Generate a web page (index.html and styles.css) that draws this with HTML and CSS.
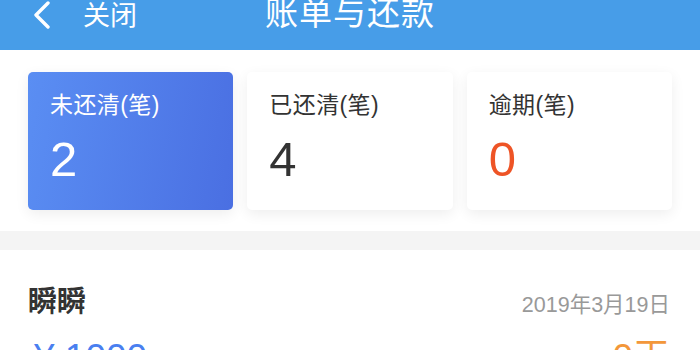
FILE: index.html
```html
<!DOCTYPE html>
<html lang="zh-CN">
<head>
<meta charset="utf-8">
<title>账单与还款</title>
<link rel="stylesheet" href="styles.css">
</head>
<body>
<header class="topbar">
  <div class="topbar-left">
    <svg class="back" width="20" height="28" viewBox="0 0 20 28"><path d="M16 2 L4 14 L16 26" fill="none" stroke="#fff" stroke-width="3.4" stroke-linecap="round" stroke-linejoin="round"/></svg>
    <span class="close">关闭</span>
  </div>
  <div class="title">账单与还款</div>
  <div></div>
</header>
<section class="stats">
  <div class="card card-active">
    <div class="card-label">未还清(笔)</div>
    <div class="card-num">2</div>
  </div>
  <div class="card">
    <div class="card-label">已还清(笔)</div>
    <div class="card-num">4</div>
  </div>
  <div class="card">
    <div class="card-label">逾期(笔)</div>
    <div class="card-num num-red">0</div>
  </div>
</section>
<div class="divider"></div>
<section class="bill">
  <div class="bill-row">
    <div class="bill-name">瞬瞬</div>
    <div class="bill-date">2019年3月19日</div>
  </div>
  <div class="bill-row bill-row2">
    <div class="bill-amount">¥ 1000</div>
    <div class="bill-days">0天</div>
  </div>
</section>
</body>
</html>
```
FILE: styles.css
```css
html, body {
  margin: 0;
  padding: 0;
  background: #fff;
  font-family: "Liberation Sans", "Noto Sans CJK SC", sans-serif;
  overflow: hidden;
}
.topbar {
  height: 50px;
  background: #479de8;
  color: #fff;
  display: grid;
  grid-template-columns: 1fr auto 1fr;
  align-items: start;
}
.topbar-left {
  display: flex;
  align-items: center;
  padding-left: 32px;
  height: 34px;
  margin-top: -2px;
}
.back {
  display: block;
}
.close {
  font-size: 27px;
  line-height: 34px;
  margin-left: 31px;
  margin-top: 1px;
}
.title {
  font-size: 33px;
  line-height: 34px;
  margin-top: -3px;
  letter-spacing: 1px;
}
.stats {
  display: grid;
  grid-template-columns: repeat(3, 1fr);
  gap: 14px;
  padding: 22px 28px 21px;
}
.card {
  height: 138px;
  box-sizing: border-box;
  border-radius: 5px;
  background: #fff;
  box-shadow: 0 4px 14px rgba(0, 0, 0, 0.07);
  padding: 17px 22px 0;
  color: #333;
}
.card-active {
  background: linear-gradient(100deg, #5a8ef3 0%, #4a6fe2 100%);
  color: #fff;
}
.card-label {
  font-size: 23px;
  line-height: 32px;
  letter-spacing: 0.4px;
}
.card-num {
  font-size: 49px;
  line-height: 49px;
  margin-top: 14px;
}
.num-red {
  color: #ee5426;
}
.divider {
  height: 19px;
  background: #f4f4f4;
}
.bill {
  padding: 0 30px 0 28px;
}
.bill-row {
  display: flex;
  justify-content: space-between;
  align-items: baseline;
  margin-top: 32px;
}
.bill-name {
  font-size: 29px;
  font-weight: bold;
  color: #333;
  line-height: 40px;
}
.bill-date {
  font-size: 21.5px;
  color: #999;
}
.bill-row2 {
  margin-top: 5px;
}
.bill-amount {
  font-size: 37px;
  color: #4a7ff0;
  padding-left: 6px;
}
.bill-days {
  font-size: 37px;
  color: #f3973a;
}
```
